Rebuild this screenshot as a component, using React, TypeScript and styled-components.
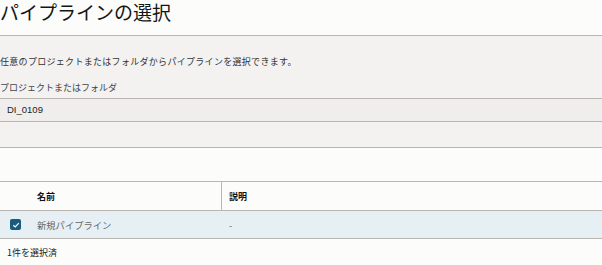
import React from 'react';
import styled, {createGlobalStyle} from 'styled-components';

const line = '#b9b6b1';

const GlobalStyle = createGlobalStyle`
  body {
    margin: 0;
    background: #fcfcfa;
    font-family: "Noto Sans CJK JP", "Noto Sans", sans-serif;
    color: #222;
  }
`

const Page = styled.div`
  display: flex;
  flex-direction: column;
  width: 602px;
  overflow: hidden;
`

const Title = styled.h1`
  margin: 0;
  height: 35px;
  font-size: 19px;
  font-weight: 400;
  line-height: 24px;
  color: #151515;
  border-bottom: 1px solid ${line};
`

const Panel = styled.div<{ height: number; tone?: string }>`
  height: ${p => p.height}px;
  background: ${p => p.tone || '#f3f2f1'};
  border-bottom: 1px solid ${line};
  display: flex;
  flex-direction: column;
  box-sizing: content-box;
`

const Description = styled.div`
  font-size: 9px;
  letter-spacing: 0.3px;
  line-height: 12px;
  color: #333;
  margin-top: 20px;
`

const FieldLabel = styled.div`
  font-size: 9px;
  line-height: 12px;
  color: #444;
  margin-top: 14px;
`

const FieldValue = styled.div`
  font-size: 9.5px;
  line-height: 22px;
  padding-left: 7px;
  color: #222;
  font-family: "Liberation Sans", "Noto Sans CJK JP", sans-serif;
`

const Spacer = styled.div`
  height: 33px;
`

const Table = styled.div`
  border-top: 1px solid ${line};
  display: flex;
  flex-direction: column;
`

const Row = styled.div<{ selected?: boolean; height: number }>`
  display: grid;
  grid-template-columns: 37px 184px 1fr;
  height: ${p => p.height}px;
  align-items: center;
  background: ${p => p.selected ? '#e6f0f4' : 'transparent'};
  border-bottom: 1px solid ${line};
`

const HeadCell = styled.div<{ divider?: boolean }>`
  font-size: 9px;
  font-weight: 700;
  color: #111;
  height: 100%;
  display: flex;
  align-items: center;
  ${p => p.divider ? `border-left: 1px solid ${line}; padding-left: 7px;` : ''}
`

const Cell = styled.div<{ indent?: boolean }>`
  font-size: 9.3px;
  color: #666;
  ${p => p.indent ? 'padding-left: 8px;' : ''}
`

const CheckCell = styled.div`
  display: flex;
  justify-content: center;
  padding-right: 6px;
`

const Checkbox = styled.div`
  width: 11px;
  height: 11px;
  border-radius: 2px;
  background: #195b7d;
  display: flex;
  align-items: center;
  justify-content: center;
`

const Footer = styled.div`
  font-size: 9px;
  line-height: 12px;
  color: #222;
  padding: 8px 0 0 7px;
`

function App() {
  return (
    <Page>
      <GlobalStyle/>
      <Title>パイプラインの選択</Title>
      <Panel height={62}>
        <Description>任意のプロジェクトまたはフォルダからパイプラインを選択できます。</Description>
        <FieldLabel>プロジェクトまたはフォルダ</FieldLabel>
      </Panel>
      <Panel height={22} tone="#efeeec">
        <FieldValue>DI_0109</FieldValue>
      </Panel>
      <Panel height={25}/>
      <Spacer/>
      <Table>
        <Row height={28}>
          <div/>
          <HeadCell>名前</HeadCell>
          <HeadCell divider>説明</HeadCell>
        </Row>
        <Row height={27} selected>
          <CheckCell>
            <Checkbox>
              <svg width="8" height="8" viewBox="0 0 8 8">
                <path d="M1.3 4.2 L3.2 6 L6.8 2.2" fill="none" stroke="#fff" strokeWidth="1.2"/>
              </svg>
            </Checkbox>
          </CheckCell>
          <Cell>新規パイプライン</Cell>
          <Cell indent>-</Cell>
        </Row>
      </Table>
      <Footer>1件を選択済</Footer>
    </Page>
  );
}

export default App;
